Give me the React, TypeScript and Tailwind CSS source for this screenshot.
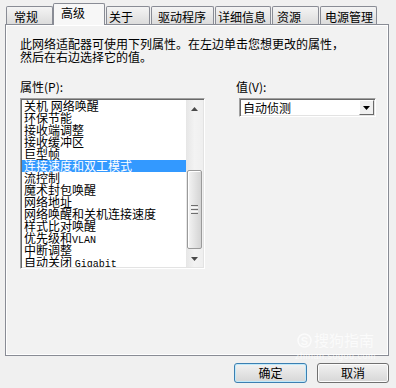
import { ReactNode } from 'react';

const tabs = [
  { label: '常规', cls: 'w-[47px] pl-[7px]' },
  { label: '高级', cls: 'w-[52px] pl-[7px]', active: true },
  { label: '关于', cls: 'w-[44px] pl-[2px] ml-[1px]' },
  { label: '驱动程序', cls: 'w-[63px] pl-[6px] ml-[1px]' },
  { label: '详细信息', cls: 'w-[56px] pl-[2px] ml-[1px]' },
  { label: '资源', cls: 'w-[47px] pl-[4px] ml-[1px]' },
  { label: '电源管理', cls: 'w-[57px] pl-[4px] ml-[1px]' },
];

const items: ReactNode[] = [
  '关机 网络唤醒',
  '环保节能',
  '接收端调整',
  '接收缓冲区',
  '巨型帧',
  '连接速度和双工模式',
  '流控制',
  '魔术封包唤醒',
  '网络地址',
  '网络唤醒和关机连接速度',
  '样式比对唤醒',
  <>
    优先级和<span className="font-['Liberation_Mono',monospace] text-[10px]">VLAN</span>
  </>,
  '中断调整',
  <>
    自动关闭 <span className="font-['Liberation_Mono',monospace] text-[10px]">Gigabit</span>
  </>,
];

const SELECTED = 5;

function Arrow({ up }: { up?: boolean }) {
  return (
    <svg width="7" height="4" viewBox="0 0 7 4">
      <path d={up ? 'M3.5 0 L7 4 L0 4 Z' : 'M0 0 L7 0 L3.5 4 Z'} fill="#4a4a4a" />
    </svg>
  );
}

function ScrollBar() {
  return (
    <div className="w-[17px] flex flex-col bg-gradient-to-r from-[#e6e6e6] via-[#f3f3f3] to-[#efefef]">
      <div className="h-[17px] flex items-center justify-center">
        <Arrow up />
      </div>
      <div className="flex-1 flex flex-col justify-end pb-[1px]">
        <div className="h-[79px] mx-[1px] rounded-[2px] border border-[#9a9a9a] bg-gradient-to-r from-[#f4f4f4] via-[#e4e4e4] to-[#d4d4d4] shadow-[inset_1px_1px_0_#fff] flex flex-col items-center justify-center gap-[1px]">
          <div className="w-[7px] h-[1px] bg-[#6e6e6e]" />
          <div className="w-[7px] h-[1px] bg-[#f8f8f8]" />
          <div className="w-[7px] h-[1px] bg-[#6e6e6e]" />
          <div className="w-[7px] h-[1px] bg-[#f8f8f8]" />
          <div className="w-[7px] h-[1px] bg-[#6e6e6e]" />
        </div>
      </div>
      <div className="h-[17px] flex items-center justify-center">
        <Arrow />
      </div>
    </div>
  );
}

export default function App() {
  return (
    <div className="relative w-[396px] h-[388px] overflow-hidden bg-[#f0f0f0] text-black text-[12px] font-['Noto_Sans_CJK_SC',sans-serif] pl-[5px] pt-[3px]">
      {/* tab strip */}
      <div className="flex items-end h-[21px] pl-[1px]">
        {tabs.map((t) =>
          t.active ? (
            <div
              key={t.label}
              className={`${t.cls} relative z-10 h-[22px] -mb-[1px] border border-b-0 border-[#898c95] bg-[#f7f7f7] pt-[2px] leading-[14px] rounded-t-[2px]`}
            >
              {t.label}
            </div>
          ) : (
            <div
              key={t.label}
              className={`${t.cls} h-[18px] border border-b-0 border-[#898c95] bg-gradient-to-b from-[#f4f4f4] to-[#dcdcdc] pt-[3px] leading-[14px] rounded-t-[2px]`}
            >
              {t.label}
            </div>
          )
        )}
      </div>

      {/* property page */}
      <div className="w-[384px] h-[332px] border border-[#898c95] bg-[#f2f2f2] shadow-[inset_1px_1px_0_#fff,inset_-1px_-1px_0_#fff] pl-[14px] pt-[12px]">
        <p className="leading-[13px]">
          此网络适配器可使用下列属性。在左边单击您想更改的属性，
          <br />
          然后在右边选择它的值。
        </p>

        <div className="flex mt-[18px]">
          <div className="w-[185px]">
            <div className="leading-[12px] h-[12px]">属性(P):</div>
            <div className="mt-[5px] h-[171px] flex border border-t-[#a0a0a0] border-l-[#a0a0a0] border-r-white border-b-white shadow-[inset_1px_1px_0_#696969,inset_-1px_-1px_0_#e3e3e3] bg-white p-[1px]">
              <div className="flex-1 overflow-hidden">
                {items.map((it, i) => (
                  <div
                    key={i}
                    className={`h-[12px] leading-[12px] pl-[2px] whitespace-nowrap ${
                      i === SELECTED ? 'bg-[#3399ff] text-white' : ''
                    }`}
                  >
                    {it}
                  </div>
                ))}
              </div>
              <ScrollBar />
            </div>
          </div>

          <div className="ml-[31px] w-[139px]">
            <div className="leading-[12px] h-[12px]">值(V):</div>
            <div className="mt-[5px] ml-[3px] w-[137px] h-[19px] flex items-center border border-t-[#a0a0a0] border-l-[#a0a0a0] border-r-white border-b-white shadow-[inset_1px_1px_0_#696969,inset_-1px_-1px_0_#e3e3e3] bg-white p-[1px]">
              <span className="flex-1 pl-[2px] leading-[15px]">自动侦测</span>
              <div className="w-[15px] h-[15px] bg-[#f0f0f0] border border-t-white border-l-white border-r-[#696969] border-b-[#696969] flex items-center justify-center">
                <svg width="7" height="4" viewBox="0 0 7 4">
                  <path d="M0 0 L7 0 L3.5 4 Z" fill="#000" />
                </svg>
              </div>
            </div>
          </div>
        </div>
      </div>

      {/* dialog buttons */}
      <div className="flex justify-end gap-[10px] pr-[7px] mt-[7px]">
        <button className="w-[73px] h-[20px] rounded-[3px] border border-[#3c7fb1] bg-gradient-to-b from-[#f2f2f2] to-[#d6d6d6] shadow-[inset_0_0_0_1px_#bfe9fb] leading-[16px]">
          确定
        </button>
        <button className="w-[72px] h-[20px] rounded-[3px] border border-[#707070] bg-gradient-to-b from-[#f2f2f2] to-[#d6d6d6] shadow-[inset_0_0_0_1px_#fcfcfc] leading-[16px]">
          取消
        </button>
      </div>

      {/* watermark */}
      <div className="absolute left-[295px] top-[332px] flex flex-col items-center opacity-70 pointer-events-none">
        <div className="flex items-center gap-[2px] text-white">
          <svg width="15" height="15" viewBox="0 0 15 15">
            <circle cx="7.5" cy="7.5" r="6.5" fill="none" stroke="#fff" strokeWidth="1.6" />
            <text x="7.5" y="11.5" textAnchor="middle" fontSize="11" fontWeight="bold" fill="#fff" fontFamily="Liberation Sans, sans-serif">
              S
            </text>
          </svg>
          <span className="text-[15px] leading-[16px]">搜狗指南</span>
        </div>
        <span className="text-[9px] leading-[10px] text-white font-['Liberation_Sans',sans-serif] tracking-[0.5px] mt-[3px]">
          zhinan.sogou.com
        </span>
      </div>
    </div>
  );
}
